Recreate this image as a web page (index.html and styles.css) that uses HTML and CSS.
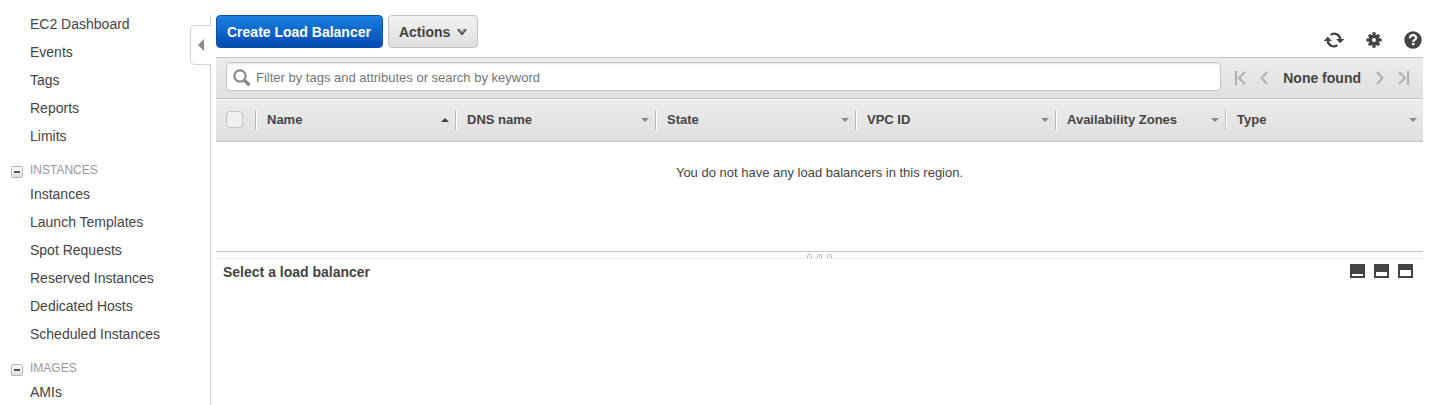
FILE: index.html
```html
<!DOCTYPE html>
<html lang="en">
<head>
<meta charset="utf-8">
<title>Load Balancers</title>
<link rel="stylesheet" href="styles.css">
</head>
<body>
<div class="app">
  <nav class="sidebar">
    <ul class="nav-list">
      <li><a href="#">EC2 Dashboard</a></li>
      <li><a href="#">Events</a></li>
      <li><a href="#">Tags</a></li>
      <li><a href="#">Reports</a></li>
      <li><a href="#">Limits</a></li>
    </ul>
    <div class="nav-heading"><button class="toggle" aria-label="Collapse Instances"></button><h2>INSTANCES</h2></div>
    <ul class="nav-list">
      <li><a href="#">Instances</a></li>
      <li><a href="#">Launch Templates</a></li>
      <li><a href="#">Spot Requests</a></li>
      <li><a href="#">Reserved Instances</a></li>
      <li><a href="#">Dedicated Hosts</a></li>
      <li><a href="#">Scheduled Instances</a></li>
    </ul>
    <div class="nav-heading"><button class="toggle" aria-label="Collapse Images"></button><h2>IMAGES</h2></div>
    <ul class="nav-list">
      <li><a href="#">AMIs</a></li>
    </ul>
  </nav>
  <div class="divider">
    <button class="collapse" aria-label="Hide navigation"><svg width="6" height="12" viewBox="0 0 6 12"><path d="M6 0v12L0 6z" fill="#8a8a8a"/></svg></button>
  </div>
  <main class="main">
    <div class="actions">
      <button class="btn primary">Create Load Balancer</button>
      <button class="btn">Actions<svg width="10" height="8" viewBox="0 0 10 8" fill="none"><path d="M2.500 .8L5 3.800 7.500 .8" stroke="#aaa" stroke-width="1.400"/><path d="M.7 1.300L5 6.300l4.300-5" stroke="#444" stroke-width="1.500"/></svg></button>
      <div class="tools">
        <button class="icon" aria-label="Refresh"><svg width="20" height="16" viewBox="0 0 20 16" fill="none" stroke="#444" stroke-width="2.400"><path d="M6.600 2.900A6 6 0 0 1 16.200 7.500"/><path d="M13.400 13.100A6 6 0 0 1 3.800 8.500"/><path d="M12 7h8.400l-4.200 4.200zM-.4 9H8L3.800 4.800z" fill="#444" stroke="none"/></svg></button>
        <button class="icon" aria-label="Settings"><svg width="16" height="16" viewBox="0 0 16 16"><g stroke="#444" stroke-width="3.200"><path d="M8 .3v15.400M.3 8h15.400M2.900 2.900l10.200 10.200M13.100 2.900L2.900 13.100"/></g><circle cx="8" cy="8" r="5.500" fill="#444"/><circle cx="8" cy="8" r="2" fill="#fff"/></svg></button>
        <button class="icon" aria-label="Help"><svg width="18" height="18" viewBox="0 0 18 18"><circle cx="9" cy="9" r="8.700" fill="#444"/><path d="M5.900 7.200c0-4 6.300-4 6.300-.4 0 2.200-2.900 2-2.900 4.100" fill="none" stroke="#fff" stroke-width="2.200"/><path d="M8.100 12h2.400v2.300H8.100z" fill="#fff"/></svg></button>
      </div>
    </div>
    <div class="filter">
      <label class="search">
        <svg width="18" height="18" viewBox="0 0 18 18" fill="none" stroke="#8a8a8a"><circle cx="7" cy="7" r="5.700" stroke-width="2.200"/><path d="M11.300 11.300l5.200 5" stroke-width="3.400"/></svg>
        <input type="text" aria-label="Filter" placeholder="Filter by tags and attributes or search by keyword">
      </label>
      <div class="pager">
        <button class="page" aria-label="First page"><svg width="11" height="14" viewBox="0 0 11 14"><path d="M1 0v14M10 1L4 7l6 6"/></svg></button>
        <button class="page" aria-label="Previous page"><svg width="8" height="14" viewBox="0 0 8 14"><path d="M7 1L1.500 7 7 13"/></svg></button>
        <span class="count">None found</span>
        <button class="page" aria-label="Next page"><svg width="8" height="14" viewBox="0 0 8 14"><path d="M1 1l5.500 6L1 13"/></svg></button>
        <button class="page" aria-label="Last page"><svg width="11" height="14" viewBox="0 0 11 14"><path d="M10 0v14M1 1l6 6-6 6"/></svg></button>
      </div>
    </div>
    <table class="grid">
      <colgroup><col class="c-check"><col class="c-wide"><col class="c-wide"><col class="c-wide"><col class="c-wide"><col class="c-zone"><col></colgroup>
      <thead>
        <tr>
          <th><input class="check" type="checkbox" aria-label="Select all"></th>
          <th><div class="head up">Name</div></th>
          <th><div class="head">DNS name</div></th>
          <th><div class="head">State</div></th>
          <th><div class="head">VPC ID</div></th>
          <th><div class="head">Availability Zones</div></th>
          <th><div class="head">Type</div></th>
        </tr>
      </thead>
      <tbody>
        <tr><td class="empty" colspan="7">You do not have any load balancers in this region.</td></tr>
      </tbody>
    </table>
    <div class="splitter"><svg width="26" height="4" viewBox="0 0 26 4" fill="#fff" stroke="#b5b5b5"><path d="M.5 4V2l1-1.500h2l1 1.500v2M10.500 4V2l1-1.500h2l1 1.500v2M20.500 4V2l1-1.500h2l1 1.500v2M2 3h1M12 3h1M22 3h1"/></svg></div>
    <section class="detail">
      <h1>Select a load balancer</h1>
      <div class="panes">
        <button class="pane low" aria-label="Small pane"></button>
        <button class="pane mid" aria-label="Half pane"></button>
        <button class="pane high" aria-label="Large pane"></button>
      </div>
    </section>
  </main>
</div>
</body>
</html>
```
FILE: styles.css
```css
* { box-sizing: border-box; }
body {
  margin: 0;
  background: #fff;
  color: #444;
  font: 14px/20px "Liberation Sans", Arial, sans-serif;
}
button, input { margin: 0; font: inherit; color: inherit; }
button { padding: 0; border: 0; background: none; }
svg { display: block; }
.app { display: flex; height: 100vh; overflow: hidden; }
.sidebar { flex: none; width: 190px; padding-top: 10px; }
.nav-list { margin: 0; padding: 0 0 0 30px; list-style: none; line-height: 28px; }
.nav-list a { color: #444; text-decoration: none; }
.nav-heading { display: flex; align-items: center; gap: 7px; height: 30px; padding: 10px 0 0 11px; }
.nav-heading h2 { margin: 0; font-size: 12px; font-weight: normal; color: #999; }
.toggle {
  display: flex; align-items: center; justify-content: center;
  width: 12px; height: 12px; margin-top: 4px;
  border: 1px solid #b5b5b5; border-radius: 2px;
  background: linear-gradient(#fff, #ddd);
}
.toggle::before { content: ""; width: 6px; height: 2px; background: #555; }
.divider { display: flex; flex-direction: column; flex: none; width: 21px; margin: 15px 5px 0 0; }
.divider::before { content: ""; height: 10px; border-right: 1px solid #d5d5d5; }
.divider::after { content: ""; flex: 1; border-right: 1px solid #d5d5d5; }
.collapse {
  display: flex; align-items: center; height: 40px; padding-left: 7px;
  border: 1px solid #d5d5d5; border-right: 0; border-radius: 5px 0 0 5px;
}
.main { flex: 1; min-width: 0; padding: 15px 14px 0 0; }
.actions { display: flex; gap: 5px; height: 42px; }
.btn {
  display: flex; align-items: center; gap: 7px; height: 33px; padding: 0 10px;
  border: 1px solid #c3c3c3; border-radius: 4px;
  background: linear-gradient(#f3f3f3, #dfdfdf);
  font-weight: bold; white-space: nowrap;
}
.btn.primary {
  padding-right: 11px;
  border-color: #0a4ea8;
  background: linear-gradient(#1a80e2, #0349b0);
  box-shadow: inset 0 0 1px #4b9cf0;
  color: #fff;
}
.tools { display: flex; align-items: center; gap: 22px; margin-left: auto; padding: 8px 1px 0 0; }
.filter {
  display: flex; align-items: flex-start; height: 42px; padding: 4px 14px 0 10px;
  border: solid #c6c6c6; border-width: 1px 0;
  background: linear-gradient(#ececec, #e0e0e0);
}
.search {
  display: flex; flex: 1; align-items: center; gap: 5px; height: 29px; padding-left: 6px;
  border: 1px solid #c6c6c6; border-radius: 4px; background: #fff;
  box-shadow: inset 0 1px 2px #e4e4e4;
}
.search svg { margin-top: 3px; }
.search input { flex: 1; padding: 2px 0 0; border: 0; outline: 0; background: none; font-size: 13px; }
.search input::placeholder { color: #757575; opacity: 1; }
.pager { display: flex; align-items: center; gap: 14px; height: 31px; padding-left: 14px; }
.page svg { fill: none; stroke: #b0b0b0; stroke-width: 2; }
.count { padding: 0 1px; font-weight: bold; }
.grid { width: 100%; border-collapse: collapse; table-layout: fixed; }
.c-check { width: 39px; }
.c-wide { width: 200px; }
.c-zone { width: 170px; }
.grid thead { background: linear-gradient(#ececec, #dfdfdf); }
.grid th {
  height: 43px; padding: 0 0 2px; font-size: 13px; text-align: left;
  box-shadow: inset 0 1px #fafafa, inset 0 -1px #c3c3c3;
}
.check {
  display: block; appearance: none; width: 17px; height: 17px; margin-left: 10px;
  border: 1px solid #c3c3c3; border-radius: 4px; background: #f0f0f0;
}
.head {
  display: flex; align-items: center; justify-content: space-between;
  padding: 0 6px 0 11px; border-left: 1px solid #bbb; box-shadow: inset 1px 0 #fff;
}
.head::after { content: ""; border: 4px solid transparent; border-top-color: #888; border-bottom: 0; }
.head.up::after { border-top: 0; border-bottom: 4px solid #444; }
.empty { height: 109px; padding: 21px 0 0; text-align: center; vertical-align: top; font-size: 13px; }
.splitter {
  display: flex; align-items: flex-end; justify-content: center; height: 8px;
  border-top: 1px solid #c6c6c6; border-bottom: 1px solid #eee;
}
.detail { display: flex; align-items: flex-start; justify-content: space-between; padding: 3px 10px 0 7px; }
.detail h1 { margin: 0; font-size: 14px; }
.panes { display: flex; gap: 9px; padding-top: 2px; }
.pane { width: 15px; height: 14px; border: 2px solid #444; background: #fff; }
.low { border-top-width: 10px; }
.mid { border-top-width: 8px; }
.high { border-top-width: 6px; }
```
